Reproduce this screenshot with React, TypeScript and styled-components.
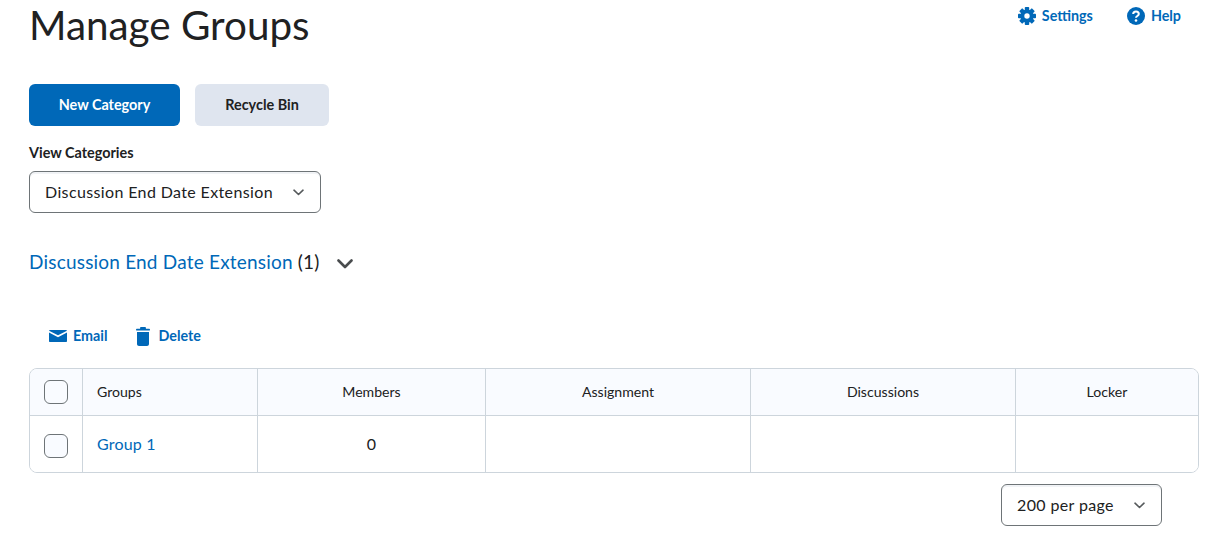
import styled, { createGlobalStyle } from 'styled-components';

const GlobalStyle = createGlobalStyle`
  html, body {
    margin: 0;
    padding: 0;
    background: #fff;
    font-family: Lato, "Noto Sans", sans-serif;
    color: #202122;
  }
`;

const Page = styled.div`
  width: 1225px;
  height: 551px;
  box-sizing: border-box;
  padding: 0 26px 0 29px;
  overflow: hidden;
`;

const Header = styled.header`
  display: flex;
  justify-content: space-between;
  align-items: flex-start;
  height: 84px;
`;

const Title = styled.h1`
  margin: 0;
  font-size: 40.4px;
  font-weight: 400;
  line-height: 50px;
`;

const HeaderLinks = styled.nav`
  display: flex;
  gap: 34px;
  padding: 6px 18px 0 0;
`;

const ActionLink = styled.a`
  display: flex;
  align-items: center;
  gap: ${props => props.$gap ?? 6}px;
  height: 20px;
  font-size: 14.3px;
  line-height: 18px;
  font-weight: 700;
  color: #0068b8;
  white-space: nowrap;
`;

const LinkText = styled.span`
  padding-bottom: 1px;
`;

const ButtonRow = styled.div`
  display: flex;
  gap: 15px;
`;

const Button = styled.button`
  width: ${props => props.$width}px;
  height: 42px;
  border: 0;
  border-radius: 6px;
  padding: 0 0 2px;
  font-family: inherit;
  font-size: 14.4px;
  font-weight: 700;
  background: ${props => (props.$primary ? '#0068b8' : '#dfe5ef')};
  color: ${props => (props.$primary ? '#fff' : '#202122')};
`;

const FieldLabel = styled.label`
  display: block;
  margin-top: 18px;
  font-size: 14.4px;
  font-weight: 700;
  line-height: 18px;
`;

const SelectBox = styled.div`
  display: flex;
  align-items: center;
  justify-content: space-between;
  box-sizing: border-box;
  width: ${props => props.$width}px;
  height: 42px;
  margin-top: ${props => props.$top ?? 0}px;
  padding: 0 16px 0 15px;
  border: 1px solid #6e7477;
  border-radius: 6px;
  box-shadow: inset 0 2px 0 0 rgba(185, 194, 208, 0.2);
  font-size: 16px;
  letter-spacing: 0.37px;
  color: #202122;
  background: #fff;
`;

const SelectText = styled.span`
  padding-bottom: 2px;
`;

const CategoryHeading = styled.div`
  display: flex;
  align-items: center;
  margin-top: 35px;
  height: 26px;
  font-size: 19px;
  letter-spacing: 0.2px;
`;

const CategoryLink = styled.a`
  color: #0068b8;
  margin-right: 5px;
`;

const CategoryChevron = styled.span`
  display: flex;
  margin-left: 17px;
  margin-top: 5px;
`;

const Toolbar = styled.div`
  display: flex;
  gap: 28px;
  margin-top: 50px;
  padding-left: 20px;
  height: 24px;
  align-items: center;
`;

const Table = styled.div`
  display: grid;
  grid-template-columns: 53px 175px 228px 265px 265px 1fr;
  grid-template-rows: 47px 56px;
  box-sizing: border-box;
  width: 1170px;
  margin-top: 20px;
  border: 1px solid #cdd5dc;
  border-radius: 8px;
  overflow: hidden;
`;

const Cell = styled.div`
  display: flex;
  align-items: center;
  justify-content: ${props => (props.$start ? 'flex-start' : 'center')};
  padding-left: ${props => (props.$start ? '14px' : '0')};
  box-sizing: border-box;
  font-size: 14.1px;
  background: ${props => (props.$head ? '#f9fbff' : '#fff')};
  border-right: ${props => (props.$last ? '0' : '1px solid #cdd5dc')};
  border-bottom: ${props => (props.$head ? '1px solid #cdd5dc' : '0')};
`;

const CellText = styled.span`
  padding-bottom: 2px;
`;

const Check = styled.span`
  display: block;
  box-sizing: border-box;
  width: 24px;
  height: 24px;
  margin-top: ${props => (props.$body ? '4px' : '0')};
  border: 1px solid #6e7477;
  border-radius: 6px;
  background: #f9fbff;
`;

const GroupLink = styled.a`
  padding-bottom: 2px;
  font-size: 16px;
  letter-spacing: 0.2px;
  color: #0068b8;
`;

const MemberCount = styled.span`
  padding-bottom: 2px;
  font-size: 16px;
`;

const Pager = styled.div`
  display: flex;
  justify-content: flex-end;
  margin-top: 11px;
  padding-right: 37px;
`;

const Chevron = () => (
  <svg width="11" height="7" viewBox="0 0 11 7" fill="none">
    <path d="M1 1.200 L5.500 5.500 L10 1.200" stroke="#565a5c" strokeWidth="1.600" strokeLinecap="round" strokeLinejoin="round" />
  </svg>
);

const BigChevron = () => (
  <svg width="16" height="10" viewBox="0 0 16 10" fill="none">
    <path d="M1.500 1.500 L8 8 L14.500 1.500" stroke="#494c4e" strokeWidth="2.600" strokeLinecap="round" strokeLinejoin="round" />
  </svg>
);

const GearIcon = () => (
  <svg width="18" height="18" viewBox="0 0 18 18">
    <g fill="#0068b8">
      {[0, 45, 90, 135, 180, 225, 270, 315].map(angle => (
        <rect key={angle} x="6.800" y="0" width="4.400" height="5" rx="0.800" transform={`rotate(${angle} 9 9)`} />
      ))}
      <circle cx="9" cy="9" r="6.600" />
    </g>
    <circle cx="9" cy="9" r="2.700" fill="#fff" />
  </svg>
);

const HelpIcon = () => (
  <svg width="18" height="18" viewBox="0 0 18 18">
    <circle cx="9" cy="9" r="9" fill="#0068b8" />
    <path d="M6.200 7c0-1.600 1.200-2.600 2.800-2.600s2.800 1 2.800 2.500c0 2-2.800 2.100-2.800 3.900" fill="none" stroke="#fff" strokeWidth="2" />
    <circle cx="9" cy="13.500" r="1.300" fill="#fff" />
  </svg>
);

const MailIcon = () => (
  <svg width="18" height="12" viewBox="0 0 18 12">
    <path fill="#0068b8" d="M1 0h16c.5 0 .9.300 1 .7L9 5.300 0 .7C.1.300.5 0 1 0z" />
    <path fill="#0068b8" d="M0 2.600l9 4.600 9-4.600V11c0 .6-.4 1-1 1H1c-.6 0-1-.4-1-1z" />
  </svg>
);

const TrashIcon = () => (
  <svg width="16" height="19" viewBox="0 0 16 19">
    <path fill="#0068b8" d="M5.800 0h4.400c.4 0 .7.300.7.700v1.100h3.300c.5 0 .8.400.8.900s-.3.900-.8.900H1.800c-.5 0-.8-.4-.8-.9s.3-.9.800-.9h3.300V.7c0-.4.300-.7.700-.7z" />
    <path fill="#0068b8" d="M2 5h12v12c0 1.100-.9 2-2 2H4c-1.100 0-2-.9-2-2z" />
  </svg>
);

export default function App() {
  return (
    <Page>
      <GlobalStyle />
      <Header>
        <Title>Manage Groups</Title>
        <HeaderLinks>
          <ActionLink>
            <GearIcon />
            <LinkText>Settings</LinkText>
          </ActionLink>
          <ActionLink>
            <HelpIcon />
            <LinkText>Help</LinkText>
          </ActionLink>
        </HeaderLinks>
      </Header>

      <ButtonRow>
        <Button $primary $width={151}>New Category</Button>
        <Button $width={134}>Recycle Bin</Button>
      </ButtonRow>

      <FieldLabel>View Categories</FieldLabel>
      <SelectBox $width={292} $top={9}>
        <SelectText>Discussion End Date Extension</SelectText>
        <Chevron />
      </SelectBox>

      <CategoryHeading>
        <CategoryLink>Discussion End Date Extension</CategoryLink>
        (1)
        <CategoryChevron>
          <BigChevron />
        </CategoryChevron>
      </CategoryHeading>

      <Toolbar>
        <ActionLink>
          <MailIcon />
          <LinkText>Email</LinkText>
        </ActionLink>
        <ActionLink $gap={7}>
          <TrashIcon />
          <LinkText>Delete</LinkText>
        </ActionLink>
      </Toolbar>

      <Table>
        <Cell $head><Check /></Cell>
        <Cell $head $start><CellText>Groups</CellText></Cell>
        <Cell $head><CellText>Members</CellText></Cell>
        <Cell $head><CellText>Assignment</CellText></Cell>
        <Cell $head><CellText>Discussions</CellText></Cell>
        <Cell $head $last><CellText>Locker</CellText></Cell>
        <Cell><Check $body /></Cell>
        <Cell $start><GroupLink>Group 1</GroupLink></Cell>
        <Cell><MemberCount>0</MemberCount></Cell>
        <Cell />
        <Cell />
        <Cell $last />
      </Table>

      <Pager>
        <SelectBox $width={161}>
          <SelectText>200 per page</SelectText>
          <Chevron />
        </SelectBox>
      </Pager>
    </Page>
  );
}
